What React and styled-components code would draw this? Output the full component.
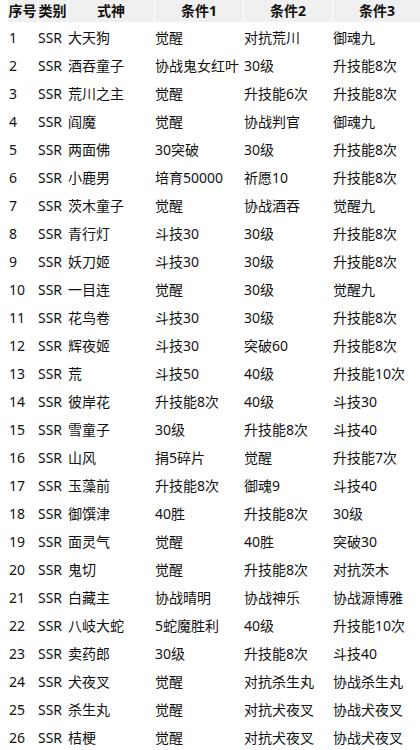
import styled, { createGlobalStyle } from 'styled-components';

const GlobalStyle = createGlobalStyle`
  html, body {
    margin: 0;
    padding: 0;
    background: #fff;
  }
  body {
    font-family: "Noto Sans", "Noto Sans CJK SC", sans-serif;
    color: #111;
  }
`;

const Table = styled.div`
  padding-left: 8px;
  width: 412px;
  overflow: hidden;
`;

const COLS = '29px 29px 86px 88px 88px 88px';

const HeadRow = styled.div`
  display: grid;
  grid-template-columns: ${COLS};
  column-gap: 1px;
  height: 22px;
  margin-bottom: 2px;
`;

const HeadCell = styled.div`
  background: #f0f0f0;
  font-size: 14px;
  font-weight: 700;
  line-height: 22px;
  text-align: center;
  white-space: nowrap;
`;

const Row = styled.div`
  display: grid;
  grid-template-columns: ${COLS};
  column-gap: 1px;
  height: 28px;
  align-items: center;
`;

const Cell = styled.div`
  font-size: 14px;
  line-height: 28px;
  white-space: nowrap;
  padding-left: ${(p) => (p.$first ? '1px' : '0')};
`;

const rows = [
  ['大天狗', '觉醒', '对抗荒川', '御魂九'],
  ['酒吞童子', '协战鬼女红叶', '30级', '升技能8次'],
  ['荒川之主', '觉醒', '升技能6次', '升技能8次'],
  ['阎魔', '觉醒', '协战判官', '御魂九'],
  ['两面佛', '30突破', '30级', '升技能8次'],
  ['小鹿男', '培育50000', '祈愿10', '升技能8次'],
  ['茨木童子', '觉醒', '协战酒吞', '觉醒九'],
  ['青行灯', '斗技30', '30级', '升技能8次'],
  ['妖刀姬', '斗技30', '30级', '升技能8次'],
  ['一目连', '觉醒', '30级', '觉醒九'],
  ['花鸟卷', '斗技30', '30级', '升技能8次'],
  ['辉夜姬', '斗技30', '突破60', '升技能8次'],
  ['荒', '斗技50', '40级', '升技能10次'],
  ['彼岸花', '升技能8次', '40级', '斗技30'],
  ['雪童子', '30级', '升技能8次', '斗技40'],
  ['山风', '捐5碎片', '觉醒', '升技能7次'],
  ['玉藻前', '升技能8次', '御魂9', '斗技40'],
  ['御馔津', '40胜', '升技能8次', '30级'],
  ['面灵气', '觉醒', '40胜', '突破30'],
  ['鬼切', '觉醒', '升技能8次', '对抗茨木'],
  ['白藏主', '协战晴明', '协战神乐', '协战源博雅'],
  ['八岐大蛇', '5蛇魔胜利', '40级', '升技能10次'],
  ['卖药郎', '30级', '升技能8次', '斗技40'],
  ['犬夜叉', '觉醒', '对抗杀生丸', '协战杀生丸'],
  ['杀生丸', '觉醒', '对抗犬夜叉', '协战犬夜叉'],
  ['桔梗', '觉醒', '对抗犬夜叉', '协战犬夜叉'],
];

const headers = ['序号', '类别', '式神', '条件1', '条件2', '条件3'];

export default function App() {
  return (
    <>
      <GlobalStyle />
      <Table>
        <HeadRow>
          {headers.map((h) => (
            <HeadCell key={h}>{h}</HeadCell>
          ))}
        </HeadRow>
        {rows.map((r, i) => (
          <Row key={i}>
            <Cell $first>{i + 1}</Cell>
            <Cell>SSR</Cell>
            {r.map((c, j) => (
              <Cell key={j}>{c}</Cell>
            ))}
          </Row>
        ))}
      </Table>
    </>
  );
}
